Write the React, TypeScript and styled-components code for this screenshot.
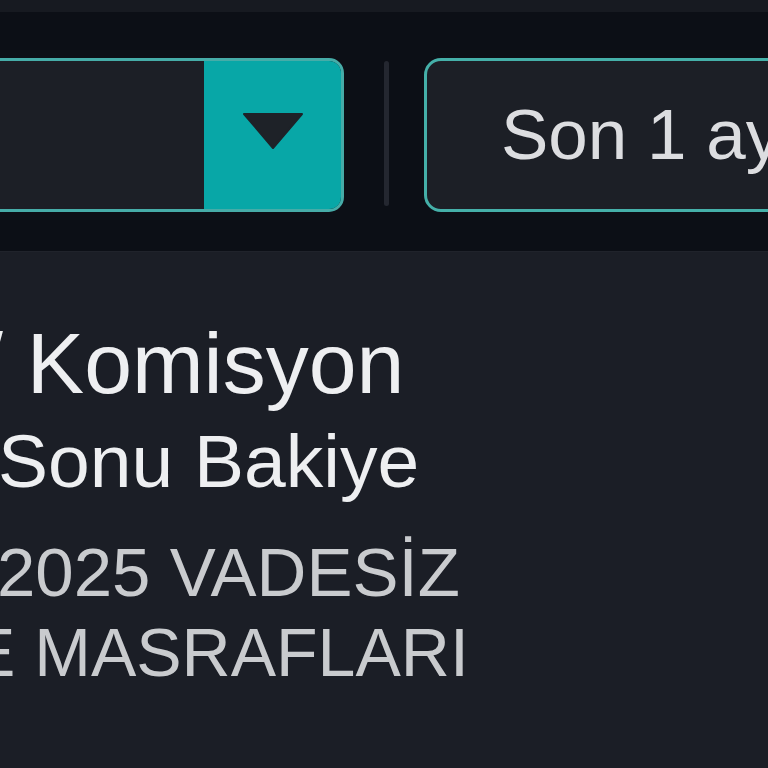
import React from 'react';
import styled, { createGlobalStyle } from 'styled-components';

const GlobalStyle = createGlobalStyle`
  html, body {
    margin: 0;
    padding: 0;
    background: #1b1e26;
    overflow: hidden;
  }
  body {
    font-family: 'Liberation Sans', Arial, Helvetica, sans-serif;
  }
`;

const Page = styled.div`
  width: 768px;
  height: 768px;
  overflow: hidden;
  display: flex;
  flex-direction: column;
  background: #1b1e26;
`;

const TopStrip = styled.div`
  height: 12px;
  background: #171a21;
`;

const Toolbar = styled.div`
  height: 240px;
  background: #0c0f16;
  display: flex;
  align-items: flex-start;
  padding-top: 46px;
  box-sizing: border-box;
  border-bottom: 1px solid #20232b;
`;

const Select = styled.div`
  flex: none;
  display: flex;
  width: 400px;
  height: 154px;
  margin-left: -56px;
  border: 3px solid #46aca8;
  border-radius: 15px;
  box-sizing: border-box;
  overflow: hidden;
  background: #1c1f26;
`;

const SelectValue = styled.div`
  flex: 1;
`;

const SelectButton = styled.div`
  width: 137px;
  display: flex;
  align-items: center;
  justify-content: center;
  background: #08a7a7;
  padding-bottom: 8px;
  box-sizing: border-box;
`;

const Divider = styled.div`
  flex: none;
  width: 5px;
  height: 145px;
  margin: 3px 35px 0 40px;
  border-radius: 3px;
  background: #242730;
`;

const RangeBox = styled.div`
  flex: none;
  width: 420px;
  height: 154px;
  border: 3px solid #45b0a9;
  border-radius: 17px;
  box-sizing: border-box;
  background: #1c1f26;
  display: flex;
  align-items: center;
  padding-left: 74px;
  padding-bottom: 2px;
  font-size: 71px;
  color: #dcdde0;
  white-space: nowrap;
`;

const Content = styled.div`
  display: flex;
  flex-direction: column;
  padding-top: 68px;
`;

const Line = styled.div<{ $size: number; $shift: number; $gap: number; $muted?: boolean }>`
  font-size: ${(p) => p.$size}px;
  line-height: 1;
  margin-left: ${(p) => p.$shift}px;
  margin-top: ${(p) => p.$gap}px;
  color: ${(p) => (p.$muted ? '#c9cbce' : '#eeeff1')};
  white-space: nowrap;
`;

const Arrow = () => (
  <svg width="62" height="36" viewBox="0 0 62 36">
    <path d="M2 1 H60 L31 35 Z" fill="#1e2228" stroke="#1e2228" strokeWidth="2" strokeLinejoin="round" />
  </svg>
);

export default function App() {
  return (
    <Page>
      <GlobalStyle />
      <TopStrip />
      <Toolbar>
        <Select>
          <SelectValue />
          <SelectButton>
            <Arrow />
          </SelectButton>
        </Select>
        <Divider />
        <RangeBox>Son 1 ay</RangeBox>
      </Toolbar>
      <Content>
        <Line $size={86} $shift={-21} $gap={0}>/ Komisyon</Line>
        <Line $size={75} $shift={-2} $gap={18}>Sonu Bakiye</Line>
        <Line $size={69} $shift={-3} $gap={39} $muted>2025 VADESİZ</Line>
        <Line $size={68} $shift={-30} $gap={11} $muted>E MASRAFLARI</Line>
      </Content>
    </Page>
  );
}
